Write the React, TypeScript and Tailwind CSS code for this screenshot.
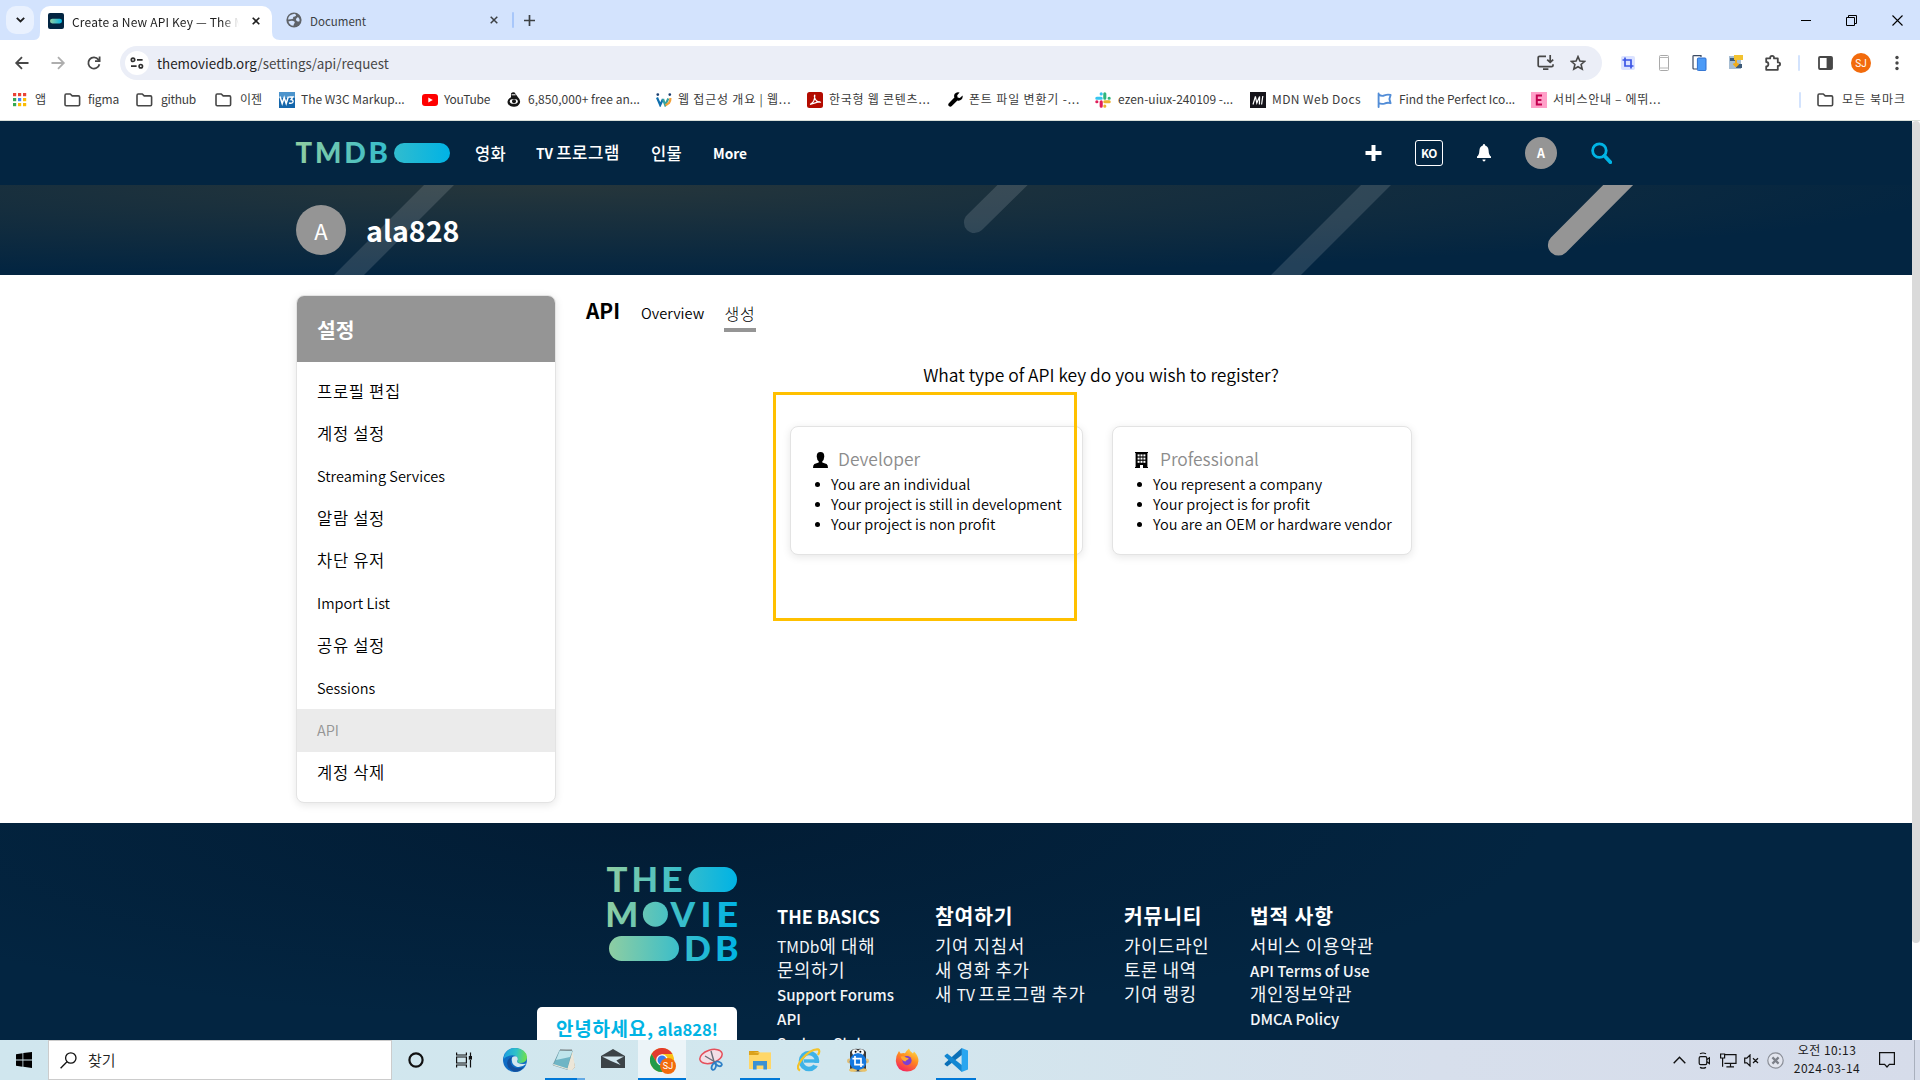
import type { ReactNode } from "react";

const KR = "font-['Noto_Sans_CJK_KR',sans-serif]";

/* ---------- shared helpers ---------- */

// Hangul is set a little larger and looser than the Latin text beside it.
function Mixed({ text }: { text: string }) {
  const parts = text.split(/([가-힣][가-힣\s,]*)/).filter(Boolean);
  return (
    <>
      {parts.map((part, i) =>
        /[가-힣]/.test(part) ? (
          <span key={i} className="text-[1.14em] leading-none tracking-[0.04em]">
            {part}
          </span>
        ) : (
          <span key={i}>{part}</span>
        ),
      )}
    </>
  );
}

const Folder = () => (
  <svg width="17" height="14" viewBox="0 0 17 14" fill="none" stroke="#474747" strokeWidth="1.6" strokeLinejoin="round">
    <path d="M1 2.6V11.6Q1 12.8 2.2 12.8H14.4Q15.6 12.8 15.6 11.6V4Q15.6 2.9 14.4 2.9H8.2L6.3 1H2.2Q1 1 1 2.6Z" />
  </svg>
);

/* ---------- browser chrome ---------- */

function TabStrip() {
  return (
    <div className="flex h-10 shrink-0 items-start bg-[#d3e3fd] pl-[6px] text-[11.5px] text-[#1f1f1f]">
      <div className="mt-[6px] flex h-[28px] w-[28px] items-center justify-center rounded-[10px] bg-[#e9f1fe]">
        <svg width="9" height="6" viewBox="0 0 9 6" fill="none" stroke="#1f1f1f" strokeWidth="1.8">
          <path d="M0.8 0.8L4.5 4.5L8.2 0.8" />
        </svg>
      </div>
      <svg className="mt-[30px]" width="6" height="10" viewBox="0 0 6 10">
        <path d="M0 10Q6 10 6 2V10Z" fill="#fff" />
      </svg>
      <div className="mt-[6px] flex h-[34px] w-[232px] items-center rounded-t-[10px] bg-white pl-2 pb-1">
        <svg width="16" height="16" viewBox="0 0 16 16">
          <defs>
            <linearGradient id="fav"><stop stopColor="#90cea1" /><stop offset="1" stopColor="#01b4e4" /></linearGradient>
          </defs>
          <rect width="16" height="16" rx="2" fill="#032541" />
          <rect x="2" y="5.8" width="12" height="4.6" rx="2.3" fill="url(#fav)" />
        </svg>
        <div className="ml-2 mt-[1px] w-[168px] overflow-hidden whitespace-nowrap text-[12px] leading-5 tracking-[0.17px] [mask-image:linear-gradient(90deg,#000_150px,transparent_167px)]">
          Create a New API Key — The M
        </div>
        <svg className="ml-[12px]" width="8" height="8" viewBox="0 0 8 8" stroke="#1f1f1f" strokeWidth="1.6"><path d="M0.7 0.7L7.3 7.3M7.3 0.7L0.7 7.3" /></svg>
      </div>
      <svg className="mt-[30px]" width="8" height="10" viewBox="0 0 8 10"><path d="M0 2Q0 10 8 10H0Z" fill="#fff" /></svg>
      <div className="mt-[6px] flex h-[28px] w-[226px] items-center pl-[6px] pr-[8px]">
        <svg width="16" height="16" viewBox="0 0 16 16">
          <circle cx="8" cy="8" r="7.6" fill="#5f6368" />
          <path d="M8.6 1.8Q10.6 2.6 10 3.8Q9 4.8 7.6 4.8Q6.8 5.2 7.2 6.4Q6.6 7.2 4.6 7.2L2 7.6Q2.4 2.6 8.6 1.8ZM2.4 9.4Q5.4 8.4 7.4 9Q9 9.6 8.8 10.8Q7.8 11.6 7.4 13.8Q3.6 13.4 2.4 9.4ZM12 5Q14 7 13.6 9Q12.8 10 11.2 9.2Q9.6 8.6 10 7Q10.6 5.8 12 5Z" fill="#d3e3fd" />
        </svg>
        <span className="ml-2 mt-[1px] leading-5 text-[#3c4043]">Document</span>
        <svg className="ml-auto" width="8" height="8" viewBox="0 0 8 8" stroke="#3c4043" strokeWidth="1.5"><path d="M0.7 0.7L7.3 7.3M7.3 0.7L0.7 7.3" /></svg>
      </div>
      <div className="ml-[6px] mt-3 h-4 w-[2px] rounded bg-[#a8c7fa]" />
      <svg className="ml-[10px] mt-[15px]" width="11" height="11" viewBox="0 0 11 11" stroke="#3c4043" strokeWidth="1.7"><path d="M5.5 0V11M0 5.5H11" /></svg>
      <div className="ml-auto flex h-10 items-center gap-[35px] pr-[17px]">
        <svg width="10" height="10" viewBox="0 0 10 10" stroke="#000" fill="none"><path d="M0 5.5H10" /></svg>
        <svg width="11" height="11" viewBox="0 0 11 11" stroke="#000" fill="none"><path d="M0.5 2.5H8.5V10.5H0.5ZM2.5 2.5V0.5H10.5V8.5H8.5" /></svg>
        <svg width="11" height="11" viewBox="0 0 11 11" stroke="#000" fill="none" strokeWidth="1.1"><path d="M0.5 0.5L10.5 10.5M10.5 0.5L0.5 10.5" /></svg>
      </div>
    </div>
  );
}

function Toolbar() {
  return (
    <div className="flex h-[46px] shrink-0 items-center bg-white pl-[14px]">
      <svg width="16" height="16" viewBox="0 0 16 16" fill="none" stroke="#474747" strokeWidth="1.8"><path d="M14.5 8H2.5M8 2.2L2.2 8L8 13.8" /></svg>
      <svg className="ml-[20px]" width="16" height="16" viewBox="0 0 16 16" fill="none" stroke="#aeaeae" strokeWidth="1.8"><path d="M1.5 8H13.5M8 2.2L13.8 8L8 13.8" /></svg>
      <svg className="ml-[20px]" width="16" height="16" viewBox="0 0 16 16" fill="none" stroke="#474747" strokeWidth="1.8"><path d="M13.4 9.2A5.6 5.6 0 1 1 12.4 4.6L13.6 6" /><path d="M13.6 1.6V6.2H9" /></svg>
      <div className="ml-[18px] flex h-[34px] w-[1482px] items-center rounded-full bg-[#ebeef7] pl-[5px]">
        <div className="flex h-6 w-6 items-center justify-center rounded-full bg-white">
          <svg width="14" height="12" viewBox="0 0 14 12" fill="none" stroke="#303030" strokeWidth="1.7"><circle cx="3" cy="2.8" r="1.7" /><path d="M7 2.8H12.6M1 9.2H6.6" /><circle cx="10.8" cy="9.2" r="1.7" /></svg>
        </div>
        <span className="-mt-px ml-[8px] text-[13.4px] leading-5 text-[#474747]">
          <span className="text-[#1f1f1f]">themoviedb.org</span>/settings/api/request
        </span>
        <svg className="ml-auto" width="18" height="16" viewBox="0 0 18 16" fill="none" stroke="#474747" strokeWidth="1.7"><path d="M9 1.3H2.6Q1.2 1.3 1.2 2.6V10.4Q1.2 11.6 2.6 11.6H14.6Q16 11.6 16 10.4V9.2M6 14.2H11.4" /><path d="M13.2 0V7M10.2 4.6L13.2 7.4L16.2 4.6" /></svg>
        <svg className="ml-[15px] mr-[16px]" width="16" height="16" viewBox="0 0 16 16" fill="none" stroke="#474747" strokeWidth="1.6"><path d="M8 1.6L9.9 6L14.7 6.4L11.1 9.5L12.2 14.2L8 11.7L3.8 14.2L4.9 9.5L1.3 6.4L6.1 6Z" /></svg>
      </div>
      <div className="ml-[18px] flex items-center">
        <svg width="16" height="16" viewBox="0 0 16 16"><rect x="1" y="1" width="14" height="14" rx="2" fill="#dbe2ff" /><path d="M5 2.5V11H13.5M2.5 5H11V13.5" fill="none" stroke="#3b55e6" strokeWidth="1.7" /></svg>
        <svg className="ml-[23px]" width="10" height="16" viewBox="0 0 10 16"><rect x="0.5" y="0.5" width="9" height="15" rx="1" fill="#fff" stroke="#a9a9a9" /><path d="M0 2.5H10M0 13H10" stroke="#b5b5b5" /></svg>
        <svg className="ml-[22px]" width="16" height="16" viewBox="0 0 16 16"><path d="M2 1Q2 0.6 3 0.6H10V2M6 14H3Q2 14 2 13V1" fill="none" stroke="#3b4a63" strokeWidth="1.2" /><rect x="6.4" y="3" width="8.6" height="12.6" rx="1" fill="#4c9bf7" stroke="#2c6fd0" /></svg>
        <svg className="ml-[21px]" width="16" height="16" viewBox="0 0 16 16"><rect x="1" y="1" width="12" height="13" fill="#a6bdd2" /><path d="M2 3H8V6H2ZM8 9H14V13H8Z" fill="#3d5a78" /><rect x="6" y="0" width="9" height="5" fill="#f2c230" /><path d="M8 5V11M5.5 8.5L8 11L10.5 8.5" stroke="#f0ac1a" strokeWidth="2" fill="none" /></svg>
        <svg className="ml-[20px]" width="18" height="18" viewBox="0 0 18 18" fill="none" stroke="#474747" strokeWidth="1.8" strokeLinejoin="round"><path d="M2.2 4.4H6.2V3.8A1.9 1.9 0 0 1 10 3.8V4.4H13.8V8.4H14.4A1.7 1.7 0 0 1 14.4 11.8H13.8V15.8H2.2V12.4A2.2 2.2 0 0 0 2.2 8Z" /></svg>
        <div className="ml-[16px] h-4 w-[2px] rounded bg-[#d3e3fd]" />
        <svg className="ml-[18px]" width="15" height="14" viewBox="0 0 15 14"><rect x="1" y="1" width="13" height="12" rx="1" fill="none" stroke="#474747" strokeWidth="1.8" /><rect x="8.6" y="1" width="5.6" height="12" fill="#474747" /></svg>
        <div className="ml-[18px] flex h-5 w-5 items-center justify-center rounded-full bg-[#f26b0c] font-['Roboto',sans-serif] text-[10px] text-white">SJ</div>
        <svg className="ml-[24px]" width="4" height="16" viewBox="0 0 4 16" fill="#474747"><circle cx="2" cy="2.5" r="1.7" /><circle cx="2" cy="8" r="1.7" /><circle cx="2" cy="13.5" r="1.7" /></svg>
      </div>
    </div>
  );
}

const bookmarks: { label: string; item: string; slot: string; text: string; icon: ReactNode }[] = [
  { label: "앱", item: "w-[51px]", slot: "w-[22px]", text: "", icon: (
    <svg width="14" height="14" viewBox="0 0 14 14">
      {["#ea4335", "#ea4335", "#ea4335", "#34a853", "#4285f4", "#fbbc04", "#34a853", "#fbbc04", "#fbbc04"].map((c, i) => (
        <rect key={i} x={(i % 3) * 5} y={Math.floor(i / 3) * 5} width="3.2" height="3.2" fill={c} />
      ))}
    </svg>) },
  { label: "figma", item: "w-[72px]", slot: "w-[24px]", text: "tracking-[-0.17px]", icon: <Folder /> },
  { label: "github", item: "w-[79px]", slot: "w-[25px]", text: "tracking-[-0.26px]", icon: <Folder /> },
  { label: "이젠", item: "w-[64px]", slot: "w-[25px]", text: "", icon: <Folder /> },
  { label: "The W3C Markup...", item: "w-[143px]", slot: "w-[22px]", text: "", icon: (
    <svg width="16" height="16" viewBox="0 0 16 16"><rect width="16" height="16" fill="#1466ab" /><rect width="16" height="6" fill="#4c94cc" /><path d="M1 4.5L3.2 11.5L5.2 5.5L7.2 11.5L9.4 4.5" fill="none" stroke="#fff" strokeWidth="1.5" /><path d="M10.2 5H14L12 7.6Q14.4 7.8 14 10Q13 12 10 11" fill="none" stroke="#fff" strokeWidth="1.4" /></svg>) },
  { label: "YouTube", item: "w-[85px]", slot: "w-[22px]", text: "tracking-[-0.29px]", icon: (
    <svg width="16" height="12" viewBox="0 0 16 12"><rect width="16" height="12" rx="3" fill="#f00" /><path d="M6.3 3.4V8.6L10.8 6Z" fill="#fff" /></svg>) },
  { label: "6,850,000+ free an...", item: "w-[149px]", slot: "w-[21px]", text: "tracking-[0.04px]", icon: (
    <svg width="14" height="15" viewBox="0 0 14 15"><path d="M4 1.5Q5 0 7.6 0.4L10.8 5Q14 8 12.8 11.2Q11 14.8 7 14.7Q2.6 14.8 0.8 11.4Q-0.6 8 4 5.2Z" fill="#151515" /><ellipse cx="6.8" cy="9.4" rx="4" ry="2.4" fill="#fff" /><circle cx="7" cy="9.3" r="2" fill="#151515" /><path d="M4.6 2.8H8.6" stroke="#fff" /></svg>) },
  { label: "웹 접근성 개요 | 웹...", item: "w-[151px]", slot: "w-[22px]", text: "tracking-[0.8px]", icon: (
    <svg width="16" height="14" viewBox="0 0 16 14" fill="none" strokeWidth="2.2"><path d="M1 4.5L4.2 12L7 6" stroke="#0f6fae" /><path d="M7 6L9.2 12L12.4 5.6" stroke="#37a3a0" /><path d="M9.6 12.4L13 10Q14.6 8 14.4 5" stroke="#f1a13a" /><circle cx="1.8" cy="1.6" r="0.7" stroke="#1b3e6f" strokeWidth="1.4" /><circle cx="13.8" cy="1.6" r="0.7" stroke="#1b3e6f" strokeWidth="1.4" /></svg>) },
  { label: "한국형 웹 콘텐츠...", item: "w-[141px]", slot: "w-[22px]", text: "tracking-[0.75px]", icon: (
    <svg width="16" height="16" viewBox="0 0 16 16"><rect width="16" height="16" rx="2.5" fill="#b30b00" /><path d="M3 12.5Q8 10 7.8 3.2Q7.4 3 7.4 4.6Q8.4 10 13.4 10.2Q13 8.8 3 12.5" fill="none" stroke="#fff" strokeWidth="1.2" /></svg>) },
  { label: "폰트 파일 변환기 -...", item: "w-[147px]", slot: "w-[21px]", text: "tracking-[0.83px]", icon: (
    <svg width="15" height="15" viewBox="0 0 15 15"><path d="M14.6 3.6L11.8 5.9L9.6 5.4L9.2 3.2L11.6 0.6Q8.6 -0.4 6.8 1.8Q5.6 3.6 6.4 5.6L0.8 11.2Q-0.4 12.8 0.9 14.1Q2.3 15.4 3.8 14.1L9.4 8.5Q11.8 9.2 13.4 7.6Q15 6 14.6 3.6Z" fill="#000" /></svg>) },
  { label: "ezen-uiux-240109 -...", item: "w-[155px]", slot: "w-[23px]", text: "", icon: (
    <svg width="16" height="16" viewBox="0 0 16 16" strokeWidth="3.1" strokeLinecap="round"><path d="M6.2 1.8V1.9M1.8 6.2H6.2" stroke="#36c5f0" /><path d="M9.8 1.8V6.2M14.1 6.2H14.2" stroke="#2eb67d" /><path d="M9.8 9.8H14.2M9.8 14.1V14.2" stroke="#ecb22e" /><path d="M6.2 9.8V14.2M1.8 9.8H1.9" stroke="#e01e5a" /></svg>) },
  { label: "MDN Web Docs", item: "w-[127px]", slot: "w-[22px]", text: "tracking-[0.43px]", icon: (
    <svg width="16" height="16" viewBox="0 0 16 16"><rect width="16" height="16" fill="#15141a" /><path d="M3 12.5L5.4 4.4L6.8 11L9.6 4.4L9.4 12.5M12.8 4L11.6 12.5" fill="none" stroke="#fff" strokeWidth="1.2" /></svg>) },
  { label: "Find the Perfect Ico...", item: "w-[154px]", slot: "w-[22px]", text: "tracking-[-0.05px]", icon: (
    <svg width="15" height="16" viewBox="0 0 15 16" fill="none" stroke="#528dd7" strokeWidth="1.9" strokeLinecap="round" strokeLinejoin="round"><path d="M1.6 1.5V15M1.6 2.5Q4.6 4.6 7.4 3.4Q10.6 2 13.6 3L12.4 7L13.6 11.2Q10.6 10.2 7.4 11.6Q4.4 12.4 1.6 11.2" /></svg>) },
  { label: "서비스안내 – 에뛰...", item: "w-[140px]", slot: "w-[22px]", text: "tracking-[0.7px]", icon: (
    <svg width="16" height="16" viewBox="0 0 16 16"><rect width="16" height="16" fill="#ff9fc8" /><path d="M11 3.6H5.8V12.4H11M5.8 8H10.4" fill="none" stroke="#c4004f" strokeWidth="2" /></svg>) },
];

function BookmarkBar() {
  return (
    <div className="flex h-[35px] shrink-0 items-center border-b border-[#d9dfd9] bg-white pb-[7px] pl-[13px] text-[12px] text-[#3c3c3c]">
      {bookmarks.map((b) => (
        <div key={b.label} className={`flex shrink-0 items-center ${b.item}`}>
          <span className={`flex shrink-0 ${b.slot}`}>{b.icon}</span>
          <span className={`-mt-[2px] whitespace-nowrap leading-5 ${b.text}`}>{b.label}</span>
        </div>
      ))}
      <div className="ml-auto h-4 w-[2px] rounded bg-[#d3e3fd]" />
      <span className="ml-[16px] flex w-[25px]"><Folder /></span>
      <span className="-mt-[2px] mr-[14px] leading-5 tracking-[1px]">모든 북마크</span>
    </div>
  );
}

/* ---------- site ---------- */

function BrandGradient({ id }: { id: string }) {
  return (
    <linearGradient id={id} gradientUnits="userSpaceOnUse" x1="0" y1="0" x2="100%" y2="0">
      <stop stopColor="#90cea1" />
      <stop offset="0.55" stopColor="#3cbec9" />
      <stop offset="1" stopColor="#00b3e5" />
    </linearGradient>
  );
}

function SiteHeader() {
  return (
    <header className="flex h-16 shrink-0 items-center bg-[#032541] pl-[296px] text-white">
      <svg width="154" height="20" viewBox="0 0 154 20" className="overflow-visible" fontFamily="Lato, sans-serif" fontWeight="900" fontSize="27.8">
        <defs><BrandGradient id="brand-wide" /></defs>
        <g fill="url(#brand-wide)">
          <text y="20" x="-0.4" textLength="16.6" lengthAdjust="spacingAndGlyphs">T</text>
          <text y="20" x="19" textLength="26.4" lengthAdjust="spacingAndGlyphs">M</text>
          <text y="20" x="48.2" textLength="21.6" lengthAdjust="spacingAndGlyphs">D</text>
          <text y="20" x="72.4" textLength="19.4" lengthAdjust="spacingAndGlyphs">B</text>
          <rect x="98" width="56" height="20" rx="10" />
        </g>
      </svg>
      <nav className="flex items-center pl-[25px] text-[13.7px] font-bold leading-6">
        <span className="w-[61px] text-[16.5px] font-medium tracking-[0.4px]">영화</span>
        <span className="w-[115px] whitespace-nowrap">TV <span className="text-[16.7px] font-medium tracking-[0.6px] leading-none">프로그램</span></span>
        <span className="w-[62px] text-[16.5px] font-medium tracking-[0.4px]">인물</span>
        <span>More</span>
      </nav>
      <div className="ml-auto flex items-center pr-[300px]">
        <svg width="17" height="16" viewBox="0 0 17 16" stroke="#fff" strokeWidth="4"><path d="M8.5 0V16M0.5 8H16.5" /></svg>
        <div className="ml-[33px] flex h-[26px] w-[28px] items-center justify-center rounded-[3px] border border-white text-[11.8px] font-bold tracking-[-0.3px]">KO</div>
        <svg className="ml-[34px]" width="14" height="18" viewBox="0 0 14 18" fill="#fff"><path d="M7 0Q8 0 8.2 1.4Q11.4 2.6 11.6 6.4Q11.8 11 14 12.6V14H0V12.6Q2.2 11 2.4 6.4Q2.6 2.6 5.8 1.4Q6 0 7 0ZM5.4 15.6H8.6Q8.4 17.6 7 17.6Q5.6 17.6 5.4 15.6Z" /></svg>
        <div className="ml-[34px] flex h-8 w-8 items-center justify-center rounded-full bg-[#959595] text-[12.4px] font-bold">A</div>
        <svg className="ml-[34px]" width="21" height="22" viewBox="0 0 21 22" fill="none" stroke="#01b4e4"><circle cx="8.4" cy="8.6" r="6.8" strokeWidth="2.8" /><path d="M13.4 13.8L19.4 20.2" strokeWidth="3.8" strokeLinecap="round" /></svg>
      </div>
    </header>
  );
}

function ProfileBanner() {
  return (
    <section className="relative h-[90px] shrink-0 overflow-hidden bg-[#032541] bg-[radial-gradient(1400px_92px_at_560px_0,#26363b,rgba(3,37,65,0))]">
      <svg className="absolute inset-0" width="1912" height="90" viewBox="0 0 1912 90" strokeWidth="21.2" strokeLinecap="round">
        <path d="M469 -30L319 120" stroke="#fff" strokeOpacity="0.13" />
        <path d="M1043 -30L974.5 37.5" stroke="#fff" strokeOpacity="0.13" />
        <path d="M1406 -30L1256 120" stroke="#fff" strokeOpacity="0.13" />
        <path d="M1648 -30L1558.5 60" stroke="#959595" />
      </svg>
      <div className="relative flex h-full items-center pl-[296px] text-white">
        <div className="flex h-[50px] w-[50px] items-center justify-center rounded-full bg-[#959595] text-[22px] font-normal leading-none">A</div>
        <h2 className="ml-[20px] text-[28.6px] font-bold leading-none">ala828</h2>
      </div>
    </section>
  );
}

const menu = ["프로필 편집", "계정 설정", "Streaming Services", "알람 설정", "차단 유저", "Import List", "공유 설정", "Sessions", "API", "계정 삭제"];

function SettingsPanel() {
  return (
    <aside className="mt-5 h-[508px] w-[260px] shrink-0 overflow-hidden rounded-lg border border-[#e3e3e3] bg-white shadow-[0_2px_8px_rgba(0,0,0,0.1)]">
      <h3 className="flex h-[66px] items-center bg-[#959595] pl-5 text-[20.4px] font-bold text-white">설정</h3>
      <ul className="pt-2">
        {menu.map((label) => (
          <li
            key={label}
            className={`flex h-[42.4px] items-center pl-5 text-[14.55px] font-[350] ${label === "API" ? "bg-[#ebebeb] text-[#959595]" : "text-black"}`}
          >
            <span className="leading-none"><Mixed text={label} /></span>
          </li>
        ))}
      </ul>
    </aside>
  );
}

function KeyCard({ icon, title, points, size }: { icon: ReactNode; title: string; points: string[]; size: string }) {
  return (
    <div className={`h-[129px] rounded-lg border border-[#e3e3e3] bg-white pt-[20px] shadow-[0_2px_8px_rgba(0,0,0,0.1)] ${size}`}>
      <div className="flex h-[27px] items-center pl-[22px]">
        <span className="-mt-px flex w-[25px]">{icon}</span>
        <span className="-mt-[3px] text-[17.4px] font-[350] leading-none text-[#8c8c8c]">{title}</span>
      </div>
      <ul className="text-[14.55px] font-[350] leading-5">
        {points.map((p) => (
          <li key={p} className="flex h-5 items-center whitespace-nowrap pl-[24px]">
            <span className="mr-[11px] h-[5px] w-[5px] rounded-full bg-black" />
            <span>{p}</span>
          </li>
        ))}
      </ul>
    </div>
  );
}

function ApiContent() {
  return (
    <div className="relative ml-[30px] w-[1030px]">
      <div className="flex h-[60px] items-baseline pt-[19px] leading-8">
        <h2 className="w-[55px] text-[20.8px] font-bold">API</h2>
        <span className="w-[83px] text-[14.6px] font-[350] text-black">Overview</span>
        <span className="mt-[2px] flex h-[36px] w-8 items-center justify-center self-start border-b-4 border-[#959595] pt-px text-[16px] font-light leading-none tracking-[0.8px]">생성</span>
      </div>
      <p className="mt-[28px] text-center text-[17.45px] font-[350] leading-6">What type of API key do you wish to register?</p>
      <div className="mt-[39px] flex justify-center gap-[29px]">
        <KeyCard
          size="w-[293px]"
          title="Developer"
          points={["You are an individual", "Your project is still in development", "Your project is non profit"]}
          icon={<svg width="15" height="16" viewBox="0 0 15 16"><path d="M7.5 0Q11.3 0 11.3 4.4Q11 8 9.3 9.2V10.4L13.6 12Q15 12.8 15 16H0Q0 12.8 1.4 12L5.7 10.4V9.2Q4 8 3.7 4.4Q3.7 0 7.5 0Z" /></svg>}
        />
        <KeyCard
          size="w-[300px]"
          title="Professional"
          points={["You represent a company", "Your project is for profit", "You are an OEM or hardware vendor"]}
          icon={
            <svg width="13" height="16" viewBox="0 0 13 16">
              <path d="M0 0H13V1H12.4V15H13V16H8V13H5V16H0V15H0.6V1H0Z" />
              {[2.4, 5.6, 8.8].map((y) => [2.6, 5.5, 8.4].map((x) => <rect key={`${x}-${y}`} x={x} y={y} width="2" height="2" fill="#fff" />))}
            </svg>
          }
        />
      </div>
      <div className="absolute left-[187px] top-[117px] h-[229px] w-[304px] border-[3px] border-[#ffc000]" />
    </div>
  );
}

const columns = [
  { title: "THE BASICS", box: "w-[158px]", links: ["TMDb에 대해", "문의하기", "Support Forums", "API", "System Status"] },
  { title: "참여하기", box: "w-[189px]", links: ["기여 지침서", "새 영화 추가", "새 TV 프로그램 추가"] },
  { title: "커뮤니티", box: "w-[126px]", links: ["가이드라인", "토론 내역", "기여 랭킹"] },
  { title: "법적 사항", box: "w-[180px]", links: ["서비스 이용약관", "API Terms of Use", "개인정보약관", "DMCA Policy"] },
];

function FooterLogo() {
  return (
    <svg width="130" height="94" viewBox="0 0 130 94" className="overflow-visible" fontFamily="Lato, sans-serif" fontWeight="900" fontSize="34.7">
      <defs><BrandGradient id="brand-stack" /></defs>
      <g fill="url(#brand-stack)">
        <text x="-0.4" y="25" textLength="21" lengthAdjust="spacingAndGlyphs">T</text>
        <text x="24.6" y="25" textLength="26.6" lengthAdjust="spacingAndGlyphs">H</text>
        <text x="54" y="25" textLength="21.6" lengthAdjust="spacingAndGlyphs">E</text>
        <rect x="81.5" y="0" width="48.5" height="25" rx="12.5" />
        <text x="-1.8" y="59.6" textLength="33" lengthAdjust="spacingAndGlyphs">M</text>
        <circle cx="48.4" cy="47.2" r="12.5" />
        <text x="63.6" y="59.6" textLength="24.6" lengthAdjust="spacingAndGlyphs">V</text>
        <text x="93.6" y="59.6" textLength="11" lengthAdjust="spacingAndGlyphs">I</text>
        <text x="109.2" y="59.6" textLength="22" lengthAdjust="spacingAndGlyphs">E</text>
        <rect x="2" y="69" width="70" height="25" rx="12.5" />
        <text x="77" y="94" textLength="27" lengthAdjust="spacingAndGlyphs">D</text>
        <text x="108" y="94" textLength="23.6" lengthAdjust="spacingAndGlyphs">B</text>
      </g>
    </svg>
  );
}

function SiteFooter() {
  return (
    <footer className="flex h-[217px] shrink-0 overflow-hidden bg-[#032541] bg-[radial-gradient(900px_200px_at_650px_0,#021c34,rgba(3,37,65,0))] pl-[537px] text-white">
      <div className="flex w-[200px] shrink-0 flex-col items-end pt-[44px]">
        <FooterLogo />
        <div className="mt-[46px] flex h-[48px] w-[200px] shrink-0 justify-center rounded-[5px] bg-white pt-[10px] text-[16.6px] font-bold leading-6 text-[#01b4e4]">
          <span className="whitespace-nowrap"><span className="text-[19px] leading-none tracking-[0.7px]">안녕하세요,</span> ala828!</span>
        </div>
      </div>
      <div className="ml-[40px] flex pt-[80px]">
        {columns.map((c) => (
          <div key={c.title} className={c.box}>
            <h4 className="h-[31px] whitespace-nowrap text-[17.9px] font-bold leading-[26px]"><Mixed text={c.title} /></h4>
            {c.links.map((l) => (
              <p key={l} className="h-6 whitespace-nowrap text-[15.1px] font-medium leading-6 text-[#f4f6f8]">
                {/[가-힣]/.test(l) ? <span className="text-[15.6px] font-normal"><Mixed text={l} /></span> : l}
              </p>
            ))}
          </div>
        ))}
      </div>
    </footer>
  );
}

/* ---------- taskbar ---------- */

const apps: { name: string; slot: string; bar: string; icon: ReactNode }[] = [
  { name: "edge", slot: "", bar: "", icon: (
    <svg width="24" height="24" viewBox="0 0 24 24">
      <defs><linearGradient id="edge-a" x1="0" y1="0.2" x2="1" y2="0.3"><stop stopColor="#1b9de2" /><stop offset="0.55" stopColor="#2fc2c8" /><stop offset="1" stopColor="#6ee04c" /></linearGradient></defs>
      <circle cx="12" cy="12" r="12" fill="#0f6cc4" />
      <path d="M0.6 11Q2 0 12 0Q23.4 0.6 24 9.6Q23.6 14.6 18 15Q14 15 14.2 13Q15.8 11.6 14.4 9.4Q12 6.6 7.4 7.4Q2.4 8.4 0.6 11Z" fill="url(#edge-a)" />
      <path d="M9.2 9Q6 14 9.2 18Q13.4 22 20.6 19Q17 24.6 10.4 23.6Q4.4 21 4 15Q4.2 10.6 9.2 9Z" fill="#134f9c" />
      <path d="M9 9.6Q12.6 7 14.6 9.8Q15.4 11.8 14 13.2Q14.4 16.6 23.4 15.8Q18 20.4 13 18.6Q7.6 16 9 9.6Z" fill="#d2e7ef" />
    </svg>) },
  { name: "notepad", slot: "", bar: "left-[5px] w-8", icon: (
    <svg width="24" height="24" viewBox="0 0 24 24"><path d="M19 2L23 19L20 22L17 20Z" fill="#8b6b3f" /><path d="M8 2L20.5 3L15.5 21.5L1 17Z" fill="#6fb5c5" stroke="#5b8791" strokeWidth="0.6" /><path d="M8 2L20.5 3L18 9L4 12Z" fill="#bfe5ec" /><path d="M1 17L15.5 21.5L20 22.5L23 19L20.5 3L15.5 20.5L1.4 16Z" fill="#ece6d8" /><path d="M8.5 2.2H20" stroke="#666" strokeDasharray="1 1" strokeWidth="1.8" /></svg>) },
  { name: "mail", slot: "", bar: "", icon: (
    <svg className="-mt-[3px]" width="24" height="20" viewBox="0 0 24 20"><path d="M0 7L12 0L24 7V19H0Z" fill="#3c4347" /><path d="M1 7.4H23L15.4 11.6L19.6 16L10 12Z" fill="#d2e6ee" /></svg>) },
  { name: "chrome", slot: "bg-[#ecf4f8]", bar: "left-0 w-12", icon: (
    <svg className="ml-[2px] mt-[2px]" width="26" height="26" viewBox="0 0 26 26">
      <circle cx="12" cy="12" r="12" fill="#fbc116" /><path d="M1.6 6A12 12 0 0 1 22.4 6H12L7 15Z" fill="#e33b2e" /><path d="M1.6 6A12 12 0 0 0 12 24L17 15H7Z" fill="#229a4a" />
      <circle cx="12" cy="12" r="5.8" fill="#fff" /><circle cx="12" cy="12" r="4.5" fill="#3b7ded" /><circle cx="18" cy="18" r="8" fill="#f26b0c" />
      <text x="18" y="21.2" fontSize="9" textAnchor="middle" fill="#fff" fontFamily="Roboto, sans-serif">SJ</text>
    </svg>) },
  { name: "snip", slot: "", bar: "", icon: (
    <svg width="24" height="24" viewBox="0 0 24 24" fill="none"><ellipse cx="12" cy="8.5" rx="11.5" ry="6.6" transform="rotate(-17 12 8.5)" stroke="#e5505b" strokeWidth="1.5" fill="#f3dfe6" /><path d="M12 3L15.4 15M6 8L16 14" stroke="#6a6f78" strokeWidth="1.4" /><ellipse cx="14.8" cy="18.6" rx="2" ry="3.4" transform="rotate(20 14.8 18.6)" stroke="#2d7fc6" strokeWidth="1.8" /><ellipse cx="19.6" cy="15.8" rx="3.4" ry="2" transform="rotate(25 19.6 15.8)" stroke="#2d7fc6" strokeWidth="1.8" /></svg>) },
  { name: "explorer", slot: "", bar: "left-[4px] w-10", icon: (
    <svg width="22" height="20" viewBox="0 0 22 20"><path d="M0 1H9L11 3H0Z" fill="#d79b13" /><rect y="2.4" width="22" height="16.6" fill="#ffd768" /><path d="M0 1V5H9L10.5 3.4Z" fill="#dba21b" /><path d="M4 11H18V19.6H14.4V15.4H7.6V19.6H4Z" fill="#3b91d4" /></svg>) },
  { name: "ie", slot: "", bar: "", icon: (
    <svg width="24" height="24" viewBox="0 0 24 24" fill="none"><circle cx="12" cy="13" r="8" stroke="#3eb3e8" strokeWidth="4.6" /><path d="M7 13H21.6" stroke="#3eb3e8" strokeWidth="3.4" /><path d="M14 15H24V18.6L18 17.6Z" fill="#d4e6ee" /><path d="M3 22.4Q-2 20 5 11Q14 0.6 21 1.4Q23.6 2.4 21 7" stroke="#f3c32b" strokeWidth="2.2" /></svg>) },
  { name: "capture", slot: "", bar: "", icon: (
    <svg width="22" height="24" viewBox="0 0 22 24"><path d="M3 22Q11 25 19 22V4Q16 0 11 1Q6 0 3 4Z" fill="#3a3a3a" /><ellipse cx="8" cy="4.2" rx="3" ry="3" fill="#fff" /><ellipse cx="14" cy="4.2" rx="3" ry="3" fill="#fff" /><circle cx="8.6" cy="3.8" r="1" /><circle cx="13.4" cy="3.8" r="1" /><circle cx="2.4" cy="13" r="2.4" fill="#e0bd77" /><circle cx="19.6" cy="13" r="2.4" fill="#e0bd77" /><ellipse cx="6" cy="22" rx="4" ry="1.8" fill="#e8c26a" /><ellipse cx="16" cy="22" rx="4" ry="1.8" fill="#e8c26a" /><circle cx="11" cy="13.6" r="8.4" fill="#1478e0" /><path d="M8 8V16.6H16.6M5.4 10.6H14V19" stroke="#fff" strokeWidth="1.7" fill="none" /></svg>) },
  { name: "firefox", slot: "", bar: "", icon: (
    <svg width="24" height="24" viewBox="0 0 24 24">
      <defs><linearGradient id="ff" x1="0.8" y1="0" x2="0.3" y2="1"><stop stopColor="#ffe14a" /><stop offset="0.45" stopColor="#ff8a1f" /><stop offset="1" stopColor="#f5215f" /></linearGradient></defs>
      <path d="M4 3L5.6 5.6Q8 4.6 10 5.2Q12 2 14 0.4Q14.6 3.4 18 5.6L19 3.6Q23.6 8 23.4 13.2Q22.6 22.6 12 23.6Q1.6 23 0.8 13Q0.8 7.6 4 3Z" fill="url(#ff)" />
      <circle cx="12" cy="12.6" r="4.6" fill="#7e3fd1" /><path d="M5.6 8.6Q9 7.6 11 9.4Q14 9.4 13.6 11Q11 12.4 10.4 13.6Q7 13 5.6 8.6Z" fill="#ffab2e" />
    </svg>) },
  { name: "vscode", slot: "", bar: "left-[4px] w-10", icon: (
    <svg width="24" height="24" viewBox="0 0 24 24"><path d="M17.6 0L24 2.6V21.4L17.6 24V0Z" fill="#2aa6f0" /><path d="M17.8 0V7L3.2 18.4L0.6 16.6V15.6L17.8 0Z" fill="#0a70b8" /><path d="M17.8 24V17L3.2 5.6L0.6 7.4V8.4L17.8 24Z" fill="#1287d2" /></svg>) },
];

function Taskbar() {
  return (
    <div className="flex h-10 shrink-0 items-stretch bg-[linear-gradient(90deg,#d0e6ee_0%,#d2e7ee_45%,#d7dfec_75%,#d6dcea_100%)]">
      <div className="flex w-12 items-center justify-center">
        <svg width="16" height="16" viewBox="0 0 16 16"><path d="M0 2.2L6.5 1.3V7.6H0ZM7.3 1.1L16 0V7.6H7.3ZM0 8.4H6.5V14.7L0 13.8ZM7.3 8.4H16V16L7.3 14.8Z" /></svg>
      </div>
      <div className="flex w-[344px] items-center border border-[#cccccc] bg-white pl-[11px] text-[15px] font-[350] text-[#222]">
        <svg width="17" height="17" viewBox="0 0 17 17" fill="none" stroke="#111" strokeWidth="1.3"><circle cx="10.8" cy="6" r="5.2" /><path d="M7 9.8L0.6 16.2" /></svg>
        <span className="-mt-px ml-[11px] leading-5">찾기</span>
      </div>
      <div className="flex w-12 items-center justify-center">
        <svg width="16" height="16" viewBox="0 0 16 16" fill="none" stroke="#111" strokeWidth="2.2"><circle cx="8" cy="8" r="6.6" /></svg>
      </div>
      <div className="flex w-[48px] items-center justify-center">
        <svg width="16" height="16" viewBox="0 0 16 16" fill="none" stroke="#111" strokeWidth="1.2"><path d="M0.6 0.5V3H10.4V0.5M0.6 15.5V13H10.4V15.5M0.6 5H10.4V11H0.6ZM14.5 0.5V4M14.5 8V15.5" /><rect x="13.4" y="4.6" width="2.2" height="2.4" fill="#111" /></svg>
      </div>
      <div className="ml-[3px] flex gap-px">
        {apps.map((a) => (
          <div key={a.name} className={`relative flex w-12 items-center justify-center ${a.slot}`}>
            {a.icon}
            {a.bar && <div className={`absolute bottom-0 h-[2px] bg-[#0078d7] ${a.bar}`} />}
            {a.name === "notepad" && <div className="absolute bottom-0 left-[37px] h-[2px] w-2 bg-[#63a9e4]" />}
          </div>
        ))}
      </div>
      <div className="ml-auto flex items-center">
        <svg width="13" height="8" viewBox="0 0 13 8" fill="none" stroke="#111" strokeWidth="1.4"><path d="M0.7 7.2L6.5 1.2L12.3 7.2" /></svg>
        <svg className="ml-[12px]" width="13" height="17" viewBox="0 0 13 17" fill="none" stroke="#111" strokeWidth="1.2"><rect x="1.2" y="4.6" width="7.6" height="8" rx="1.4" /><path d="M8.8 7.6L11.4 5.8V11.6L8.8 9.8M2 1.8Q5 0.2 8 1.8M2 15.4Q5 17 8 15.4" /></svg>
        <svg className="ml-[9px]" width="17" height="15" viewBox="0 0 17 15" fill="none" stroke="#111" strokeWidth="1.2"><path d="M5 1.6H16V10.4H4.4M10.5 10.4V13.4M6.4 13.8H14M2.6 5V13.8" /><path d="M0.6 1H4.6V5H0.6Z" fill="#d6dfec" /></svg>
        <svg className="ml-[7px]" width="15" height="13" viewBox="0 0 15 13" fill="none" stroke="#111" strokeWidth="1.2"><path d="M0.7 4.2H2.8L6 1V12L2.8 8.8H0.7ZM9 4.2L14 9M14 4.2L9 9" /></svg>
        <svg className="ml-[8px]" width="17" height="17" viewBox="0 0 17 17" fill="none"><circle cx="8.5" cy="8.5" r="7.7" stroke="#8b8f98" strokeWidth="1.2" fill="#e2e5ee" /><path d="M5.4 5.4L11.6 11.6M11.6 5.4L5.4 11.6" stroke="#7c8089" strokeWidth="2.2" /></svg>
        <div className="-mt-[3px] ml-[6px] flex w-[74px] flex-col text-center text-[12px] leading-[18px] tracking-[0.48px] text-[#1a1a1a]">
          <span>오전 10:13</span>
          <span>2024-03-14</span>
        </div>
        <svg className="ml-[15px] mr-[19px]" width="16" height="16" viewBox="0 0 16 16" fill="none" stroke="#111" strokeWidth="1.2"><path d="M0.6 0.6H15.4V12.4H10.4L8 15L5.6 12.4H0.6Z" /></svg>
        <div className="mr-[5px] h-10 w-px bg-[#a9b0bd]" />
      </div>
    </div>
  );
}

export default function App() {
  return (
    <div className={`flex h-[1080px] w-[1920px] flex-col overflow-hidden bg-white text-black ${KR}`}>
      <TabStrip />
      <Toolbar />
      <BookmarkBar />
      <div className="flex h-[919px] shrink-0">
        <main className="flex w-[1912px] flex-col">
          <SiteHeader />
          <ProfileBanner />
          <div className="flex h-[548px] shrink-0 pl-[296px]">
            <SettingsPanel />
            <ApiContent />
          </div>
          <SiteFooter />
        </main>
        <div className="flex-1 bg-white">
          <div className="h-[822px] w-2 rounded-full bg-[#dadada]" />
        </div>
      </div>
      <Taskbar />
    </div>
  );
}
